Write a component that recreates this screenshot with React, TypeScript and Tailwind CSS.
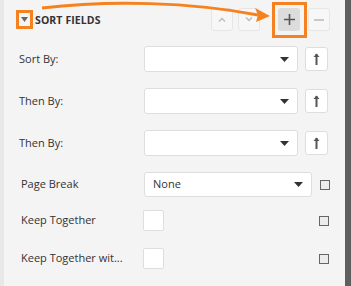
import React from "react"

const font = { fontFamily: '"Open Sans", "Noto Sans", sans-serif' }

const Caret = () => (
  <svg width="9" height="5" viewBox="0 0 9 5" className="shrink-0">
    <path d="M0 0 H9 L4.5 5 Z" fill="#333" />
  </svg>
)

const UpArrow = () => (
  <svg width="7" height="12" viewBox="0 0 7 12">
    <path d="M3.5 1 V12" stroke="#555" strokeWidth="2" />
    <path d="M0.5 4 L3.5 0.5 L6.5 4 Z" fill="#555" />
  </svg>
)

const SmallCheck = () => (
  <div className="w-[10px] h-[10px] border border-[#666] bg-[#ececec] shrink-0" />
)

const HeaderBtn = ({ children, active }: { children: React.ReactNode; active?: boolean }) => (
  <div
    className={`w-[22px] h-[23px] rounded-[3px] flex items-center justify-center ${
      active ? "bg-[#dcdcdc]" : "bg-[#f7f7f7] border border-[#e6e6e6]"
    }`}
  >
    {children}
  </div>
)

const SortRow = ({ label, last }: { label: string; last?: boolean }) => (
  <div className={`flex items-center h-[26px] pl-[15px] ${last ? "" : "mb-[16px]"}`}>
    <div className="w-[125px] text-[11px] text-[#333]">{label}</div>
    <div className="w-[154px] h-[26px] bg-white border border-[#dedede] rounded-[3px] flex items-center justify-end pr-[8px]">
      <Caret />
    </div>
    <div className="ml-[7px] w-[23px] h-[24px] bg-white border border-[#dedede] rounded-[3px] flex items-center justify-center">
      <UpArrow />
    </div>
  </div>
)

export default function App() {
  return (
    <div className="relative w-[351px] h-[286px] flex bg-[#f4f4f4] overflow-hidden" style={font}>
      <div className="w-[4px] bg-[#e8e8e8]" />
      <div className="flex-1 flex flex-col">
        {/* header */}
        <div className="h-[39px] pt-[8px] flex items-start">
          <div className="ml-[12px] w-[17px] h-[19px] mt-[2px] flex items-center justify-center">
            <svg width="7" height="5" viewBox="0 0 7 5">
              <path d="M0 0 H7 L3.5 5 Z" fill="#666" />
            </svg>
          </div>
          <div className="ml-[2px] mt-[5px] text-[10.5px] font-bold text-[#333] tracking-[0.1px]">SORT FIELDS</div>
          <div className="ml-auto flex items-center mr-[15px]">
            <HeaderBtn>
              <svg width="8" height="5" viewBox="0 0 8 5">
                <path d="M1 4.5 L4 1.5 L7 4.5" stroke="#bbb" strokeWidth="1.3" fill="none" />
              </svg>
            </HeaderBtn>
            <div className="ml-[5px]">
              <HeaderBtn>
                <svg width="8" height="5" viewBox="0 0 8 5">
                  <path d="M1 0.5 L4 3.5 L7 0.5" stroke="#bbb" strokeWidth="1.3" fill="none" />
                </svg>
              </HeaderBtn>
            </div>
            <div className="ml-[18px]">
              <HeaderBtn active>
                <svg width="11" height="11" viewBox="0 0 11 11">
                  <path d="M5.5 0 V11 M0 5.5 H11" stroke="#555" strokeWidth="1.6" />
                </svg>
              </HeaderBtn>
            </div>
            <div className="ml-[8px]">
              <HeaderBtn>
                <svg width="10" height="2" viewBox="0 0 10 2">
                  <path d="M0 1 H10" stroke="#bbb" strokeWidth="1.6" />
                </svg>
              </HeaderBtn>
            </div>
          </div>
        </div>

        {/* sort rows */}
        <div className="mt-[7px]">
          <SortRow label="Sort By:" />
          <SortRow label="Then By:" />
          <SortRow label="Then By:" last />
        </div>

        {/* page break */}
        <div className="mt-[16px] flex items-center h-[25px] pl-[17px]">
          <div className="w-[123px] text-[11px] text-[#333]">Page Break</div>
          <div className="w-[168px] h-[25px] bg-white border border-[#dedede] rounded-[3px] flex items-center pl-[8px] pr-[8px]">
            <span className="text-[11px] text-[#333]">None</span>
            <div className="ml-auto">
              <Caret />
            </div>
          </div>
          <div className="ml-[8px]">
            <SmallCheck />
          </div>
        </div>

        <div className="mt-[13px] flex items-center h-[21px] pl-[17px] pr-[16px]">
          <div className="w-[122px] text-[11px] text-[#333]">Keep Together</div>
          <div className="w-[21px] h-[21px] bg-white border border-[#dedede] rounded-[2px]" />
          <div className="ml-auto">
            <SmallCheck />
          </div>
        </div>

        <div className="mt-[17px] flex items-center h-[21px] pl-[17px] pr-[16px]">
          <div className="w-[122px] text-[11px] text-[#333] whitespace-nowrap">Keep Together wit...</div>
          <div className="w-[21px] h-[21px] bg-white border border-[#dedede] rounded-[2px]" />
          <div className="ml-auto">
            <SmallCheck />
          </div>
        </div>
      </div>
      <div className="w-[6px] bg-[#5f5f5f]" />

      {/* annotation overlays */}
      <div className="absolute left-[16px] top-[10px] w-[17px] h-[19px] border-[3px] border-[#f5821f] pointer-events-none" />
      <div className="absolute left-[272px] top-[2px] w-[35px] h-[36px] border-[3px] border-[#f5821f] pointer-events-none" />
      <svg className="absolute left-0 top-0 pointer-events-none" width="351" height="286" viewBox="0 0 351 286">
        <path d="M42 8 C 110 0, 190 2, 258 15" stroke="#f5821f" strokeWidth="3" fill="none" />
        <path d="M255 8 L270 16 L256 22 L258 15 Z" fill="#f5821f" />
      </svg>
    </div>
  )
}
